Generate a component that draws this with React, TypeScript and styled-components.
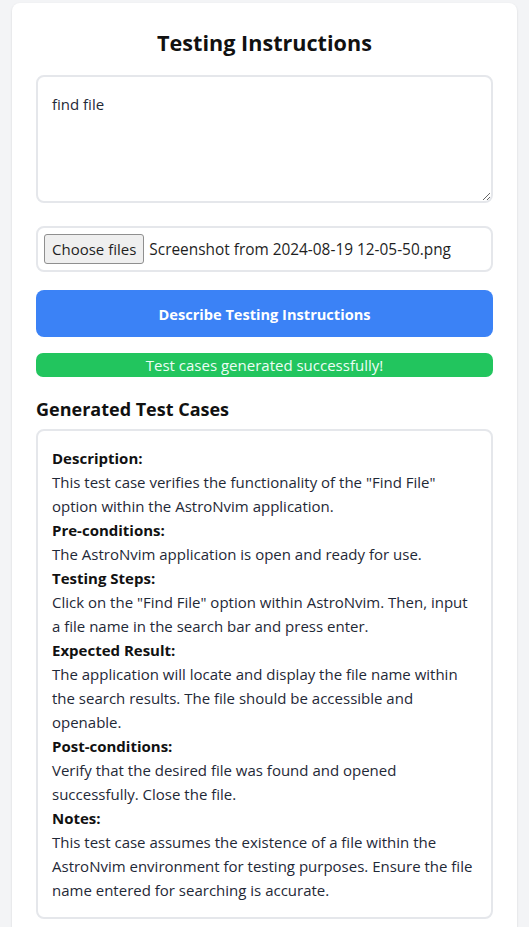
import React from "react";
import styled, { createGlobalStyle } from "styled-components";

const GlobalStyle = createGlobalStyle`
  html, body {
    margin: 0;
    padding: 0;
    background: #f3f4f6;
    font-family: "Open Sans", "Noto Sans", sans-serif;
    color: #1f2937;
  }
  * { box-sizing: border-box; }
`;

const Page = styled.div`
  padding: 3px 12px 0;
`;

const Card = styled.div`
  background: #ffffff;
  border-radius: 8px;
  box-shadow: 0 1px 3px rgba(0, 0, 0, 0.08), 0 1px 2px rgba(0, 0, 0, 0.05);
  padding: 24px;
  display: flex;
  flex-direction: column;
`;

const Title = styled.h1`
  margin: 0 0 16px;
  font-size: 21.6px;
  line-height: 32px;
  font-weight: 700;
  text-align: center;
  color: #111111;
`;

const TextArea = styled.textarea`
  display: block;
  width: 100%;
  height: 128px;
  border: 2px solid #e5e7eb;
  border-radius: 8px;
  padding: 15px 14px;
  font-family: inherit;
  font-size: 15px;
  line-height: 24px;
  color: #1f2937;
  resize: vertical;
  outline: none;
`;

const FileBox = styled.div`
  margin-top: 23px;
  border: 2px solid #e5e7eb;
  border-radius: 8px;
  padding: 6px;
  display: flex;
  align-items: center;
  gap: 5px;
`;

const ChooseButton = styled.button`
  height: 30px;
  padding: 0 7px;
  background: #efefef;
  border: 1px solid #8f8f8f;
  border-radius: 3px;
  font-family: inherit;
  font-size: 15px;
  color: #1f1f1f;
`;

const FileName = styled.span`
  font-size: 15.4px;
  color: #1f1f1f;
`;

const SubmitButton = styled.button`
  margin-top: 18px;
  height: 47px;
  width: 100%;
  border: none;
  border-radius: 8px;
  background: #3b82f6;
  color: #ffffff;
  font-family: inherit;
  font-size: 14.6px;
  font-weight: 700;
`;

const StatusBar = styled.div`
  margin-top: 16px;
  background: #22c55e;
  color: #ecfdf5;
  border-radius: 7px;
  text-align: center;
  font-size: 15px;
  line-height: 24px;
`;

const SectionTitle = styled.h2`
  margin: 18px 0 6px;
  font-size: 18px;
  line-height: 28px;
  font-weight: 700;
  color: #111111;
`;

const ResultBox = styled.div`
  border: 2px solid #e5e7eb;
  border-radius: 8px;
  padding: 15px 14px 15px;
  font-size: 15px;
  line-height: 24px;
`;

const Label = styled.div`
  font-weight: 700;
  color: #111111;
`;

const Value = styled.div`
  color: #1f2937;
`;

const fields: [string, string][] = [
  [
    "Description:",
    'This test case verifies the functionality of the "Find File" option within the AstroNvim application.',
  ],
  ["Pre-conditions:", "The AstroNvim application is open and ready for use."],
  [
    "Testing Steps:",
    'Click on the "Find File" option within AstroNvim. Then, input a file name in the search bar and press enter.',
  ],
  [
    "Expected Result:",
    "The application will locate and display the file name within the search results. The file should be accessible and openable.",
  ],
  [
    "Post-conditions:",
    "Verify that the desired file was found and opened successfully. Close the file.",
  ],
  [
    "Notes:",
    "This test case assumes the existence of a file within the AstroNvim environment for testing purposes. Ensure the file name entered for searching is accurate.",
  ],
];

export default function App() {
  return (
    <>
      <GlobalStyle />
      <Page>
        <Card>
          <Title>Testing Instructions</Title>
          <TextArea defaultValue="find file" />
          <FileBox>
            <ChooseButton type="button">Choose files</ChooseButton>
            <FileName>Screenshot from 2024-08-19 12-05-50.png</FileName>
          </FileBox>
          <SubmitButton type="button">Describe Testing Instructions</SubmitButton>
          <StatusBar>Test cases generated successfully!</StatusBar>
          <SectionTitle>Generated Test Cases</SectionTitle>
          <ResultBox>
            {fields.map(([label, value]) => (
              <React.Fragment key={label}>
                <Label>{label}</Label>
                <Value>{value}</Value>
              </React.Fragment>
            ))}
          </ResultBox>
        </Card>
      </Page>
    </>
  );
}
